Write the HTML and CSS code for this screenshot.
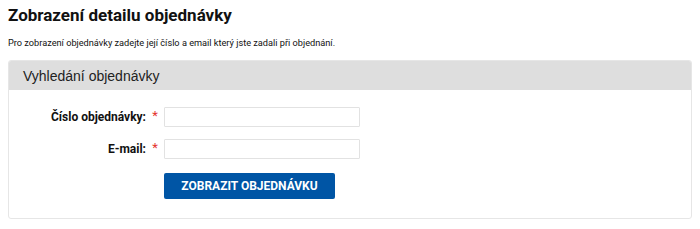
FILE: index.html
```html
<!DOCTYPE html>
<html lang="cs">
<head>
    <meta charset="UTF-8">
    <meta name="viewport" content="width=device-width, initial-scale=1.0">
    <title>Zobrazení detailu objednávky</title>
    <link rel="stylesheet" href="styles.css">
</head>
<body>

    <h1 class="page-title">Zobrazení detailu objednávky</h1>
    <p class="intro">Pro zobrazení objednávky zadejte její číslo a email který jste zadali při objednání.</p>

    <div class="panel">
        <div class="panel-heading">Vyhledání objednávky</div>
        <form class="panel-body">
            <div class="form-row">
                <label class="form-label" for="orderNo">Číslo objednávky:</label>
                <span class="required">*</span>
                <input class="form-input" type="text" id="orderNo">
            </div>
            <div class="form-row">
                <label class="form-label" for="email">E-mail:</label>
                <span class="required">*</span>
                <input class="form-input" type="text" id="email">
            </div>
            <div class="form-row">
                <span class="form-label"></span>
                <span class="required"></span>
                <button class="btn" type="button">Zobrazit objednávku</button>
            </div>
        </form>
    </div>

</body>
</html>
```

FILE: styles.css
```css
body {
    font-family: Roboto, "Liberation Sans", Arial, sans-serif;
    color: #111;
    background: #fff;
    margin: 0;
    padding: 0 8px;
}
.page-title {
    font-size: 17px;
    font-weight: bold;
    margin: 0;
    padding-top: 5px;
    line-height: 20px;
}
.intro {
    font-size: 9.2px;
    margin: 12px 0 0;
    line-height: 12px;
}
.panel {
    margin-top: 11px;
    border: 1px solid #e6e6e6;
    border-radius: 3px;
    overflow: hidden;
}
.panel-heading {
    background: #dedede;
    font-family: "Liberation Sans", Arial, sans-serif;
    font-size: 14px;
    color: #222;
    height: 29px;
    line-height: 30px;
    padding-left: 14px;
}
.panel-body {
    padding: 17px 0 19px;
    margin: 0;
    display: flex;
    flex-direction: column;
    gap: 12px;
}
.form-row {
    display: flex;
    align-items: center;
}
.form-label {
    width: 137px;
    text-align: right;
    font-size: 12px;
    font-weight: bold;
    color: #111;
}
.required {
    width: 18px;
    text-align: center;
    color: #e4332e;
    font-size: 13px;
    position: relative;
    top: -2px;
}
.form-input {
    width: 196px;
    height: 20px;
    box-sizing: border-box;
    border: 1px solid #e2e2e2;
    border-radius: 1px;
    margin: 0;
    padding: 0 4px;
    font-size: 12px;
}
.btn {
    width: 171px;
    height: 26px;
    margin-top: 2px;
    background: #0055a5;
    color: #fff;
    border: none;
    border-radius: 2px;
    font-family: Roboto, sans-serif;
    font-weight: bold;
    font-size: 12px;
    text-transform: uppercase;
    cursor: pointer;
}
```
